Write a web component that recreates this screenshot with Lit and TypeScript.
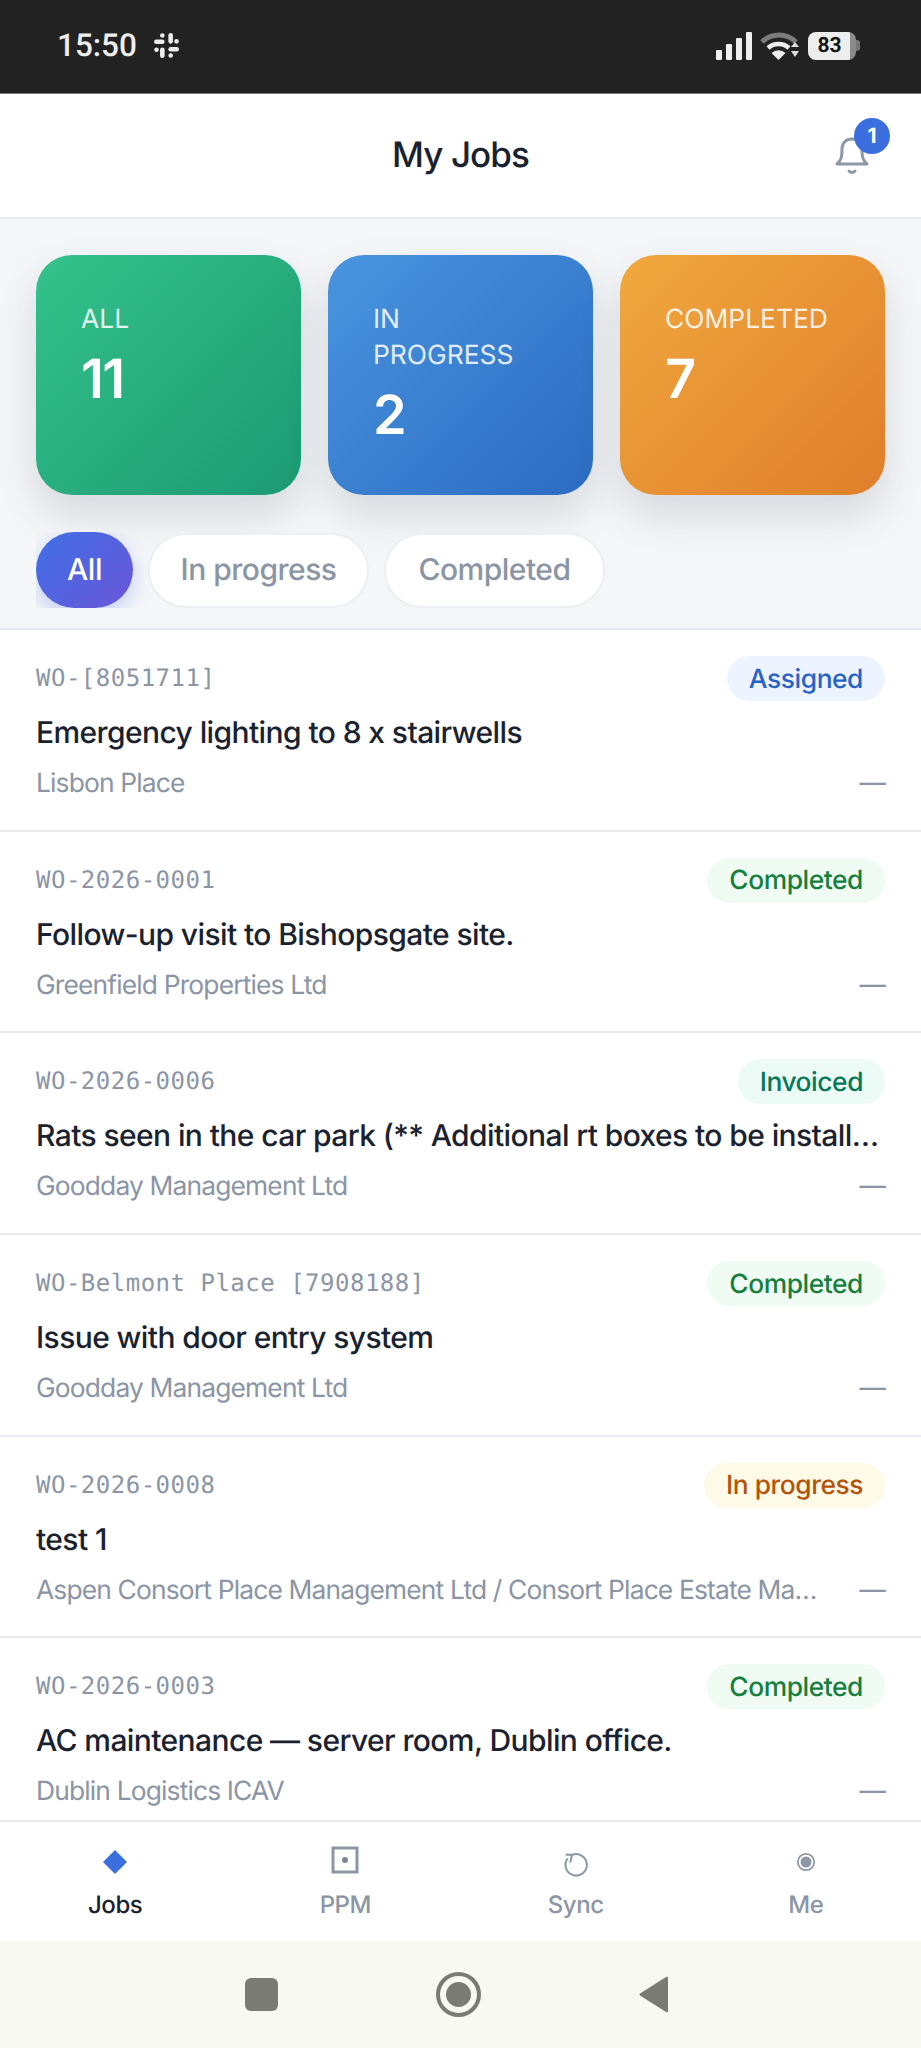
import { LitElement, css, html, svg } from 'lit'
import { customElement } from 'lit/decorators.js'

const jobs = [
  { ref: 'WO-[8051711]', status: 'Assigned', cls: 'assigned', title: 'Emergency lighting to 8 x stairwells', site: 'Lisbon Place' },
  { ref: 'WO-2026-0001', status: 'Completed', cls: 'completed', title: 'Follow-up visit to Bishopsgate site.', site: 'Greenfield Properties Ltd' },
  { ref: 'WO-2026-0006', status: 'Invoiced', cls: 'invoiced', title: 'Rats seen in the car park (** Additional rt boxes to be installed around the perimeter)', site: 'Goodday Management Ltd' },
  { ref: 'WO-Belmont Place [7908188]', status: 'Completed', cls: 'completed', title: 'Issue with door entry system', site: 'Goodday Management Ltd' },
  { ref: 'WO-2026-0008', status: 'In progress', cls: 'progress', title: 'test 1', site: 'Aspen Consort Place Management Ltd / Consort Place Estate Management' },
  { ref: 'WO-2026-0003', status: 'Completed', cls: 'completed', title: 'AC maintenance — server room, Dublin office.', site: 'Dublin Logistics ICAV' },
]

const slack = svg`<svg class="slack" viewBox="0 0 24 24" fill="#eee">
  <rect x="0" y="6.2" width="10.2" height="4.4" rx="2.2"/><circle cx="8" cy="2.4" r="2.2"/>
  <rect x="13.8" y="0" width="4.4" height="10.2" rx="2.2"/><circle cx="21.6" cy="8" r="2.2"/>
  <rect x="13.8" y="13.4" width="10.2" height="4.4" rx="2.2"/><circle cx="16" cy="21.6" r="2.2"/>
  <rect x="5.8" y="13.8" width="4.4" height="10.2" rx="2.2"/><circle cx="2.4" cy="16" r="2.2"/>
</svg>`

@customElement('app-root')
export class AppRoot extends LitElement {
  static styles = css`
    :host {
      display: flex;
      flex-direction: column;
      height: 2048px;
      overflow: hidden;
      background: #fff;
      font-family: Inter, 'Noto Sans', sans-serif;
      color: #1a2230;
      text-rendering: geometricPrecision;
    }
    * { box-sizing: border-box; }

    .status {
      flex: none;
      height: 94px;
      background: #222;
      border-bottom: 1px solid #777;
      display: flex;
      align-items: center;
      justify-content: space-between;
      padding: 0 61px 2px 57px;
      color: #eee;
    }
    .status-left, .status-right { display: flex; align-items: center; }
    .time { font: 500 31.5px Roboto, sans-serif; }
    .slack { width: 25px; height: 25px; margin-left: 17px; }
    .signal { width: 36px; height: 28px; }
    .wifi { width: 40px; height: 28px; margin-left: 8px; }
    .battery {
      margin-left: 8px;
      width: 48px;
      height: 28px;
      border-radius: 8px;
      background: linear-gradient(90deg, #eee 88%, #8a8a8a 88%);
      color: #161616;
      font: 700 21px Roboto, sans-serif;
      display: flex;
      align-items: center;
      justify-content: center;
      padding-right: 5px;
    }
    .nub { width: 4px; height: 11px; background: #777; border-radius: 0 3px 3px 0; }

    .header {
      flex: none;
      height: 125px;
      background: #fff;
      border-bottom: 2px solid #e7e9ec;
      display: flex;
      align-items: center;
      justify-content: center;
      position: relative;
      padding-bottom: 2px;
    }
    .header h1 { margin: 0; font-size: 35px; font-weight: 500; letter-spacing: -0.9px; }
    .bell { position: absolute; left: 832px; top: 40px; width: 40px; height: 46px; }
    .count {
      position: absolute;
      left: 854px;
      top: 24px;
      width: 36px;
      height: 36px;
      border-radius: 50%;
      background: #3b6fe0;
      color: #fff;
      font-size: 21px;
      font-weight: 700;
      display: flex;
      align-items: center;
      justify-content: center;
    }

    .summary {
      flex: none;
      background: #f4f6f8;
      padding: 36px 36px 20px;
      border-bottom: 2px solid #e7eaee;
    }
    .cards {
      display: grid;
      grid-template-columns: repeat(3, 265px);
      gap: 27px;
      height: 240px;
    }
    .card {
      border-radius: 36px;
      padding: 46px 45px;
      color: #fff;
      box-shadow: 0 20px 40px rgba(60, 70, 90, 0.16);
    }
    .card.green { background: linear-gradient(135deg, #34c28c, #1c9a72); }
    .card.blue { background: linear-gradient(135deg, #4a95df, #2b6bc2); }
    .card.orange { background: linear-gradient(135deg, #f1a83e, #df7e2b); }
    .label { max-width: 170px; font-size: 26.4px; line-height: 36px; opacity: 0.85; text-transform: uppercase; }
    .num { font-size: 54px; font-weight: 600; letter-spacing: -1.5px; line-height: 66px; margin-top: 10px; }

    .pills {
      display: flex;
      align-items: center;
      gap: 15px;
      margin-top: 37px;
      height: 76px;
      overflow: hidden;
    }
    .pill {
      height: 75px;
      width: 221px;
      border-radius: 38px;
      background: #fff;
      border: 2px solid #eceff3;
      color: #8b95a5;
      font-size: 30px;
      letter-spacing: -0.5px;
      font-weight: 500;
      display: flex;
      align-items: center;
      justify-content: center;
    }
    .pill.on {
      height: 76px;
      width: 97px;
      border: 0;
      background: linear-gradient(135deg, #3f70e6, #6a55d8);
      color: #fff;
      box-shadow: 0 7px 20px rgba(70, 100, 230, 0.28);
    }

    .list { flex: 1; min-height: 0; overflow: hidden; background: #fff; }
    .job {
      height: 201.7px;
      padding: 26px 36px 0;
      border-bottom: 2px solid #e8eaee;
    }
    .row { display: flex; align-items: center; justify-content: space-between; }
    .ref { font: 24px/45px 'DejaVu Sans Mono', monospace; letter-spacing: 0.5px; color: #8b95a5; }
    .badge {
      height: 45px;
      padding: 0 22px;
      border-radius: 23px;
      font-size: 26.4px;
      letter-spacing: -0.45px;
      font-weight: 500;
      display: flex;
      align-items: center;
    }
    .badge.assigned { background: #eef4ff; color: #2563c9; }
    .badge.completed { background: #f0fbf4; color: #15803d; }
    .badge.invoiced { background: #ecfbf5; color: #047857; }
    .badge.progress { background: #fefae8; color: #b45309; }
    .title {
      margin-top: 11px;
      font-size: 30px;
      letter-spacing: -0.6px;
      line-height: 42px;
      font-weight: 500;
      white-space: nowrap;
      overflow: hidden;
      text-overflow: ellipsis;
    }
    .foot { margin-top: 8px; gap: 38px; font-size: 26.4px; letter-spacing: -0.85px; line-height: 42px; color: #8b95a5; }
    .site { flex: 1; min-width: 0; white-space: nowrap; overflow: hidden; text-overflow: ellipsis; }

    .nav {
      flex: none;
      height: 121px;
      background: #fff;
      border-top: 2px solid #e7e9ec;
      display: grid;
      grid-template-columns: repeat(4, 1fr);
      padding-top: 22px;
    }
    .tab {
      display: flex;
      flex-direction: column;
      align-items: center;
      color: #8b95a5;
      font-size: 24px;
      letter-spacing: -0.4px;
      font-weight: 500;
    }
    .tab.on { color: #1a2230; }
    .tab svg { width: 40px; height: 40px; margin-bottom: 6px; }

    .system {
      flex: none;
      height: 107px;
      background: #f8f9f0;
      display: flex;
      align-items: center;
      justify-content: center;
      gap: 158px;
      padding-right: 8px;
    }
    .system svg { display: block; }
  `

  render() {
    return html`
      <div class="status">
        <div class="status-left"><span class="time">15:50</span>${slack}</div>
        <div class="status-right">
          <svg class="signal" viewBox="0 0 36 28" fill="#eee">
            <rect x="0" y="18" width="6" height="10" rx="1"/><rect x="10" y="12" width="6" height="16" rx="1"/>
            <rect x="20" y="6" width="6" height="22" rx="1"/><rect x="30" y="0" width="6" height="28" rx="1"/>
          </svg>
          <svg class="wifi" viewBox="0 0 40 28" fill="none">
            <path d="M2 10 A24 24 0 0 1 36 10" stroke="#7b7b7b" stroke-width="5"/>
            <path d="M8 16 A16 16 0 0 1 29 16" stroke="#eee" stroke-width="4.5"/>
            <path d="M11.5 21 L18.5 28 L25.5 21 A10 10 0 0 0 11.5 21Z" fill="#eee"/>
            <path d="M31 15 L35 10 L39 15Z M31 19 L39 19 L35 25Z" fill="#ddd"/>
          </svg>
          <div class="battery">83</div>
          <div class="nub"></div>
        </div>
      </div>

      <div class="header">
        <h1>My Jobs</h1>
        <svg class="bell" viewBox="0 0 40 46" fill="none" stroke="#8d97a6" stroke-width="3" stroke-linecap="round" stroke-linejoin="round">
          <path d="M5 30 C10 26 10 21 10 15 C10 9 14 5 20 5 C26 5 30 9 30 15 C30 21 30 26 35 30 Z"/>
          <path d="M17 37 Q20 40 23 37"/>
        </svg>
        <div class="count">1</div>
      </div>

      <div class="summary">
        <div class="cards">
          <div class="card green"><div class="label">All</div><div class="num">11</div></div>
          <div class="card blue"><div class="label">In progress</div><div class="num">2</div></div>
          <div class="card orange"><div class="label">Completed</div><div class="num">7</div></div>
        </div>
        <div class="pills">
          <div class="pill on">All</div>
          <div class="pill">In progress</div>
          <div class="pill">Completed</div>
        </div>
      </div>

      <div class="list">
        ${jobs.map(j => html`
          <div class="job">
            <div class="row">
              <span class="ref">${j.ref}</span>
              <span class="badge ${j.cls}">${j.status}</span>
            </div>
            <div class="title">${j.title}</div>
            <div class="row foot"><span class="site">${j.site}</span><span>—</span></div>
          </div>
        `)}
      </div>

      <div class="nav">
        <div class="tab on">
          <svg viewBox="0 0 40 40"><path d="M20 6 L32 18 L20 30 L8 18Z" fill="#3b6fe0"/></svg>
          Jobs
        </div>
        <div class="tab">
          <svg viewBox="0 0 40 40" fill="none"><rect x="8" y="4" width="24" height="24" stroke="#8d97a6" stroke-width="3"/><circle cx="20" cy="16" r="3" fill="#7d8797"/></svg>
          PPM
        </div>
        <div class="tab">
          <svg viewBox="0 0 40 40" fill="none" stroke="#8d97a6" stroke-width="2"><path d="M16 11 A10.7 10.7 0 1 1 11.7 14.3"/><path d="M9.7 10.5 L16 11 L14.3 18.5"/></svg>
          Sync
        </div>
        <div class="tab">
          <svg viewBox="0 0 40 40" fill="none"><circle cx="20" cy="18" r="8.2" stroke="#8d97a6" stroke-width="1.8"/><circle cx="20" cy="18" r="5.5" fill="#8d97a6"/></svg>
          Me
        </div>
      </div>

      <div class="system">
        <svg width="33" height="33" viewBox="0 0 33 33"><rect width="33" height="33" rx="6" fill="#7a7b74"/></svg>
        <svg width="45" height="45" viewBox="0 0 45 45"><circle cx="22.5" cy="22.5" r="20.5" fill="none" stroke="#7a7b74" stroke-width="4"/><circle cx="22.5" cy="22.5" r="12.5" fill="#7a7b74"/></svg>
        <svg width="30" height="37" viewBox="0 0 30 37"><path d="M29 2 V35 Q29 37 27 36 L1 19.5 Q0 18.5 1 17.5 L27 1 Q29 0 29 2Z" fill="#7a7b74"/></svg>
      </div>
    `
  }
}
